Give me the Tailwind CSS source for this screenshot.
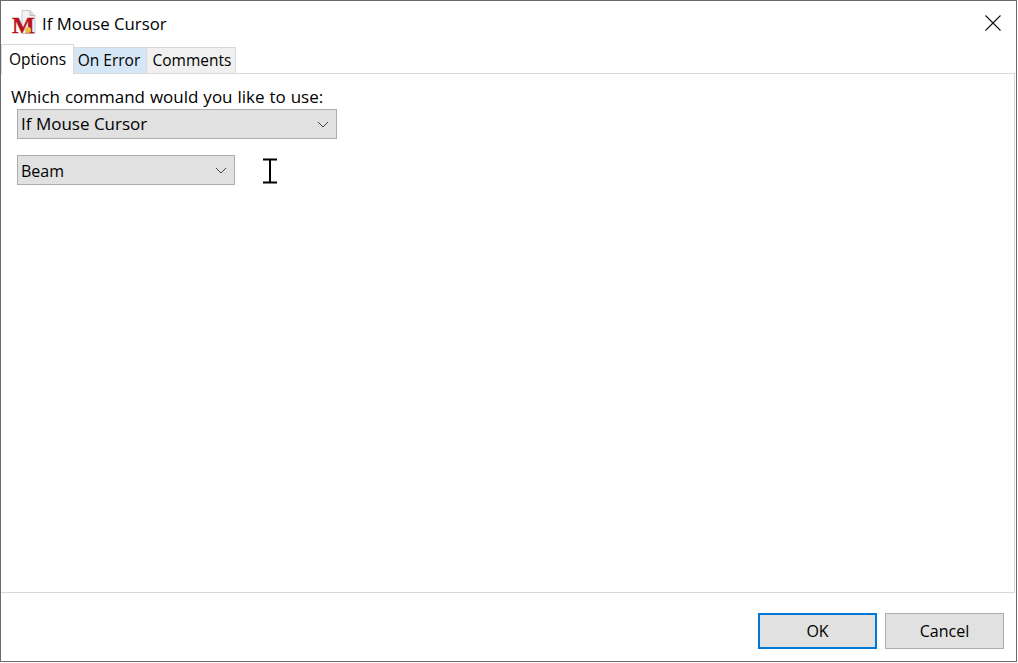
<!DOCTYPE html>
<html lang="en">
  <head>
    <meta charset="UTF-8" />
    <script src="https://cdn.jsdelivr.net/npm/@tailwindcss/browser@4"></script>
    <title>If Mouse Cursor</title>
  </head>
  <body class="bg-white overflow-hidden">
    <div class="w-[1017px] h-[662px] border border-[#6b6b6b] bg-white flex flex-col font-['Open_Sans',sans-serif] text-[17px] text-black">
      <!-- title bar -->
      <div class="h-[44px] flex items-center shrink-0">
        <svg class="ml-[10px] mt-[6px]" width="26" height="32" viewBox="0 0 26 32">
          <path d="M11 .5h8l5 5v18H11z" fill="#f3f3f3" stroke="#c9c9c9" />
          <path d="M19 .5v5h5" fill="#dcdcdc" stroke="#bdbdbd" />
          <text x="1" y="23" font-family="Liberation Serif" font-weight="700" font-size="24" fill="#b5121b" stroke="#b5121b" stroke-width="0.4">M</text>
          <circle cx="17" cy="20" r="3" fill="#e8c53a" />
        </svg>
        <span class="ml-[5px] mt-[1px] text-[16.8px]">If Mouse Cursor</span>
        <svg class="ml-auto mr-[14px]" width="18" height="18" viewBox="0 0 18 18">
          <path d="M1.5 1.5l15 15M16.5 1.5l-15 15" stroke="#111" stroke-width="1.1" fill="none" />
        </svg>
      </div>

      <!-- tabs -->
      <div class="flex items-end h-[29px] shrink-0 -mb-px z-10 text-[15.5px]">
        <div class="w-[73px] h-[30px] bg-white border border-b-0 border-[#d9d9d9] flex items-center justify-center pt-[1px]">Options</div>
        <div class="w-[72px] h-[27px] bg-[#d5e6f6] border-y border-[#d9d9d9] flex items-center justify-center pt-[1px] pr-[2px]">On Error</div>
        <div class="w-[90px] h-[27px] bg-[#f0f0f0] border border-[#d9d9d9] flex items-center justify-center pt-[1px] pl-[2px]">Comments</div>
      </div>

      <!-- options panel -->
      <div class="h-[520px] shrink-0 mr-px border border-[#d9d9d9] border-l-0 pl-[10px] pt-[11px]">
        <div class="leading-[23px] [word-spacing:0.5px]">Which command would you like to use:</div>
        <div class="ml-[6px] mt-[1px] w-[320px] h-[30px] bg-[#e1e1e1] border border-[#adadad] flex items-center pl-[3px] pr-[7px]">
          <span>If Mouse Cursor</span>
          <svg class="ml-auto" width="12" height="7" viewBox="0 0 12 7"><path d="M1 1l5 5 5-5" stroke="#444" fill="none" /></svg>
        </div>
        <div class="ml-[6px] mt-[16px] flex items-center">
          <div class="w-[218px] h-[30px] bg-[#e1e1e1] border border-[#adadad] flex items-center pl-[3px] pr-[7px]">
            <span class="text-[16px] mt-[1px]">Beam</span>
            <svg class="ml-auto" width="12" height="7" viewBox="0 0 12 7"><path d="M1 1l5 5 5-5" stroke="#444" fill="none" /></svg>
          </div>
          <svg class="ml-[28px] mt-[2px]" width="14" height="26" viewBox="0 0 14 26">
            <path d="M0 1.5h14M0 24.5h14M7 1.5v23" stroke="#000" stroke-width="2" fill="none" />
          </svg>
        </div>
      </div>

      <!-- buttons -->
      <div class="flex-1 flex justify-end items-start pt-[20px] pr-[12px] gap-[8px] text-[16px]">
        <button class="w-[119px] h-[36px] bg-[#e1e1e1] border-2 border-[#0078d7]">OK</button>
        <button class="w-[119px] h-[36px] bg-[#e1e1e1] border border-[#adadad]">Cancel</button>
      </div>
    </div>
  </body>
</html>
